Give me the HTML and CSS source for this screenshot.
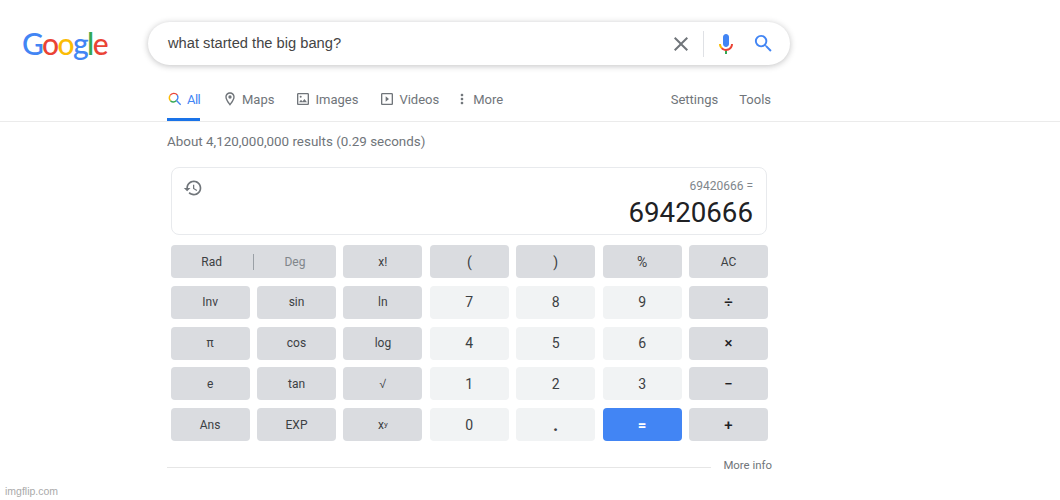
FILE: index.html
```html
<!DOCTYPE html>
<html lang="en">
  <head>
    <meta charset="UTF-8" />
    <title>what started the big bang? - Google Search</title>
    <link rel="stylesheet" href="styles.css">
  </head>
  <body>
    <header class="top">
      <div class="search-row">
        <div class="logo"><span class="blue">G</span><span class="red">o</span><span class="yellow">o</span><span class="blue">g</span><span class="green">l</span><span class="red">e</span></div>
        <div class="search-box">
          <span class="query">what started the big bang?</span>
          <svg class="icon-clear" viewBox="0 0 24 24"><path fill="#70757a" d="M19 6.41L17.59 5 12 10.59 6.41 5 5 6.41 10.59 12 5 17.59 6.41 19 12 13.41 17.59 19 19 17.59 13.41 12z"/></svg>
          <span class="search-sep"></span>
          <svg class="icon-mic" viewBox="0 0 24 24">
            <path fill="#4285f4" d="m12 15c1.66 0 3-1.31 3-2.97v-7.02c0-1.66-1.34-3.01-3-3.01s-3 1.34-3 3.01v7.02c0 1.66 1.34 2.97 3 2.97z"/>
            <path fill="#34a853" d="m11 18.08h2v3.92h-2z"/>
            <path fill="#fbbc05" d="m7.05 16.87c-1.27-1.33-2.05-2.83-2.05-4.87h2c0 1.45 0.56 2.42 1.47 3.38v0.32l-1.15 1.18z"/>
            <path fill="#ea4335" d="m12 16.93a4.97 5.25 0 0 1 -3.54 -1.55l-1.41 1.49c1.26 1.34 3.02 2.13 4.95 2.13 3.87 0 6.99-2.92 6.99-7h-1.99c0 2.92-2.24 4.93-5 4.93z"/>
          </svg>
          <svg class="icon-search" viewBox="0 0 24 24"><path fill="#4285f4" d="M15.5 14h-.79l-.28-.27A6.471 6.471 0 0 0 16 9.5 6.5 6.5 0 1 0 9.5 16c1.61 0 3.09-.59 4.23-1.57l.27.28v.79l5 4.99L20.49 19l-4.99-5zm-6 0C7.01 14 5 11.99 5 9.5S7.01 5 9.5 5 14 7.01 14 9.5 11.99 14 9.5 14z"/></svg>
        </div>
      </div>
      <nav class="tabs">
        <a class="tab active">
          <svg class="tab-icon" viewBox="0 0 24 24" fill="none" stroke-width="2">
            <path stroke="#4285f4" d="M14.2 14.2L20.5 20.5"/>
            <path stroke="#ea4335" d="M4.6 6.6A7 7 0 0 1 15.5 6"/>
            <path stroke="#fbbc05" d="M4.6 6.6A7 7 0 0 0 5.2 14.8"/>
            <path stroke="#34a853" d="M5.2 14.8A7 7 0 0 0 14.2 14.2"/>
            <path stroke="#4285f4" d="M14.2 14.2A7 7 0 0 0 15.5 6"/>
          </svg>
          All
        </a>
        <a class="tab">
          <svg class="tab-icon" viewBox="0 0 24 24"><path fill="#70757a" d="M12 2C8.13 2 5 5.13 5 9c0 5.25 7 13 7 13s7-7.75 7-13c0-3.87-3.13-7-7-7zm-5 7c0-2.76 2.24-5 5-5s5 2.24 5 5c0 2.88-2.88 7.19-5 9.88C9.92 16.21 7 11.85 7 9z"/><circle fill="#70757a" cx="12" cy="9" r="2.5"/></svg>
          Maps
        </a>
        <a class="tab">
          <svg class="tab-icon" viewBox="0 0 24 24"><path fill="#70757a" d="M19 5v14H5V5h14m0-2H5c-1.1 0-2 .9-2 2v14c0 1.1.9 2 2 2h14c1.1 0 2-.9 2-2V5c0-1.1-.9-2-2-2zm-4.86 8.86l-3 3.87L9 13.14 6 17h12l-3.86-5.14z"/><circle fill="#70757a" cx="8.5" cy="8.5" r="1.5"/></svg>
          Images
        </a>
        <a class="tab">
          <svg class="tab-icon" viewBox="0 0 24 24"><path fill="#70757a" d="M19 3H5c-1.1 0-2 .9-2 2v14c0 1.1.9 2 2 2h14c1.1 0 2-.9 2-2V5c0-1.1-.9-2-2-2zm0 16H5V5h14v14zM10 8v8l5-4z"/></svg>
          Videos
        </a>
        <a class="tab tab-more">
          <svg class="tab-dots" viewBox="0 0 24 24"><path fill="#70757a" d="M12 8c1.1 0 2-.9 2-2s-.9-2-2-2-2 .9-2 2 .9 2 2 2zm0 2c-1.1 0-2 .9-2 2s.9 2 2 2 2-.9 2-2-.9-2-2-2zm0 6c-1.1 0-2 .9-2 2s.9 2 2 2 2-.9 2-2-.9-2-2-2z"/></svg>
          More
        </a>
        <div class="tabs-right">
          <a class="tab">Settings</a>
          <a class="tab">Tools</a>
        </div>
      </nav>
    </header>

    <main class="results">
      <div class="stats">About 4,120,000,000 results (0.29 seconds)</div>

      <div class="calc">
        <div class="display">
          <svg class="icon-history" viewBox="0 0 24 24"><path fill="#70757a" d="M13 3c-4.97 0-9 4.03-9 9H1l3.89 3.89.07.14L9 12H6c0-3.87 3.13-7 7-7s7 3.13 7 7-3.13 7-7 7c-1.93 0-3.68-.79-4.94-2.06l-1.42 1.42C8.27 19.99 10.51 21 13 21c4.97 0 9-4.03 9-9s-4.03-9-9-9zm-1 5v5l4.28 2.54.72-1.21-3.5-2.08V8H12z"/></svg>
          <div class="display-text">
            <div class="expr">69420666 =</div>
            <div class="value">69420666</div>
          </div>
        </div>

        <div class="keys">
          <div class="key fn wide"><span class="half">Rad</span><span class="rad-sep"></span><span class="half off">Deg</span></div>
          <div class="key fn">x!</div>
          <div class="key fn big">(</div>
          <div class="key fn big">)</div>
          <div class="key fn big">%</div>
          <div class="key fn">AC</div>

          <div class="key fn">Inv</div>
          <div class="key fn">sin</div>
          <div class="key fn">ln</div>
          <div class="key num">7</div>
          <div class="key num">8</div>
          <div class="key num">9</div>
          <div class="key fn op">÷</div>

          <div class="key fn">π</div>
          <div class="key fn">cos</div>
          <div class="key fn">log</div>
          <div class="key num">4</div>
          <div class="key num">5</div>
          <div class="key num">6</div>
          <div class="key fn op">×</div>

          <div class="key fn">e</div>
          <div class="key fn">tan</div>
          <div class="key fn root">√</div>
          <div class="key num">1</div>
          <div class="key num">2</div>
          <div class="key num">3</div>
          <div class="key fn op">−</div>

          <div class="key fn">Ans</div>
          <div class="key fn">EXP</div>
          <div class="key fn">x<sup>y</sup></div>
          <div class="key num">0</div>
          <div class="key num dot">.</div>
          <div class="key equals">=</div>
          <div class="key fn op">+</div>
        </div>
      </div>

      <div class="more-info">
        <span class="more-line"></span>
        <a class="more-link">More info</a>
      </div>
    </main>

    <div class="watermark">imgflip.com</div>
  </body>
</html>
```

FILE: styles.css
```css
body {
  margin: 0;
  background: #fff;
  font-family: Roboto, "Liberation Sans", sans-serif;
  color: #3c4043;
  overflow: hidden;
}

/* header */
.top {
  height: 121px;
  border-bottom: 1px solid #ebebeb;
}
.search-row {
  display: flex;
  align-items: center;
  padding-top: 22px;
  height: 43px;
}
.logo {
  width: 126px;
  padding-left: 22px;
  font-family: Lato, sans-serif;
  font-size: 30px;
  font-weight: 500;
  letter-spacing: -1.6px;
  line-height: 43px;
}
.blue { color: #4285f4; }
.red { color: #ea4335; }
.yellow { color: #fbbc05; }
.green { color: #34a853; }

.search-box {
  width: 642px;
  height: 43px;
  box-sizing: border-box;
  display: flex;
  align-items: center;
  padding: 0 15px 0 20px;
  border-radius: 22px;
  background: #fff;
  box-shadow: 0 1px 6px rgba(32, 33, 36, 0.28);
}
.query {
  flex: 1;
  font-family: "Liberation Sans", sans-serif;
  font-size: 14.7px;
  color: #444;
  margin-top: -2px;
}
.icon-clear {
  width: 24px;
  height: 24px;
  margin-right: 10px;
}
.search-sep {
  width: 1px;
  height: 26px;
  background: #dfe1e5;
  margin-right: 10px;
}
.icon-mic {
  width: 24px;
  height: 24px;
  margin-right: 14px;
}
.icon-search {
  width: 23px;
  height: 23px;
}

/* tabs */
.tabs {
  display: flex;
  height: 56px;
  padding-left: 167px;
  width: 604px;
  font-size: 13px;
  color: #70757a;
}
.tab {
  display: flex;
  align-items: center;
  gap: 4px;
  height: 53px;
  padding-top: 15px;
  box-sizing: border-box;
  margin-right: 21px;
}
.tab.active {
  color: #4285f4;
  height: 56px;
  margin-right: 22px;
  letter-spacing: -0.6px;
  border-bottom: 3px solid #1a73e8;
}
.tab-icon {
  width: 16px;
  height: 16px;
}
.tab-dots {
  width: 16px;
  height: 16px;
  margin-right: -1px;
}
.tab-more {
  margin-left: -6px;
}
.tabs-right {
  margin-left: auto;
  display: flex;
}
.tabs-right .tab:last-child {
  margin-right: 0;
}

/* results */
.results {
  width: 605px;
  padding-left: 167px;
}
.stats {
  font-size: 13.4px;
  color: #70757a;
  line-height: 18px;
  padding-top: 11px;
  height: 23px;
  margin-bottom: 11px;
}

/* calculator */
.calc {
  width: 598px;
  margin-left: 4px;
}
.display {
  width: 596px;
  height: 68px;
  box-sizing: border-box;
  border: 1px solid #e8eaed;
  border-radius: 8px;
  display: flex;
  justify-content: space-between;
  padding: 10px 13px 0 11px;
}
.icon-history {
  width: 20px;
  height: 20px;
}
.display-text {
  text-align: right;
}
.expr {
  font-size: 12px;
  line-height: 17px;
  color: #80868b;
}
.value {
  font-size: 27.7px;
  line-height: 35px;
  color: #202124;
}
.keys {
  display: grid;
  grid-template-columns: repeat(7, 79px);
  grid-auto-rows: 33px;
  gap: 7.8px 7.4px;
  margin: 10px 0 0 -0.4px;
}
.key {
  display: flex;
  align-items: center;
  justify-content: center;
  border-radius: 4px;
  font-size: 12px;
}
.fn {
  background: #dadce0;
}
.num {
  background: #f1f3f4;
  font-size: 14px;
}
.big {
  font-size: 14px;
}
.root {
  font-weight: 300;
  font-size: 13px;
}
.op {
  font-size: 15px;
  font-weight: 500;
  color: #202124;
}
.dot {
  font-size: 18px;
  font-weight: 700;
}
.equals {
  background: #4285f4;
  color: #fff;
  font-size: 15px;
  font-weight: 700;
}
.wide {
  grid-column: span 2;
}
.half {
  flex: 1;
  text-align: center;
}
.off {
  color: #80868b;
}
.rad-sep {
  width: 1px;
  height: 16px;
  background: #9aa0a6;
}
sup {
  font-size: 8px;
  line-height: 0;
  vertical-align: 4px;
}

/* footer line */
.more-info {
  display: flex;
  align-items: center;
  margin-top: 17px;
  height: 18px;
}
.more-line {
  flex: 1;
  height: 1px;
  background: #e6e6e6;
}
.more-link {
  margin-left: 12px;
  padding-bottom: 4px;
  font-size: 11.4px;
  color: #70757a;
}
.watermark {
  position: absolute;
  left: 5px;
  top: 485px;
  font-family: "Liberation Sans", sans-serif;
  font-size: 10.5px;
  color: #aaa;
}
```
